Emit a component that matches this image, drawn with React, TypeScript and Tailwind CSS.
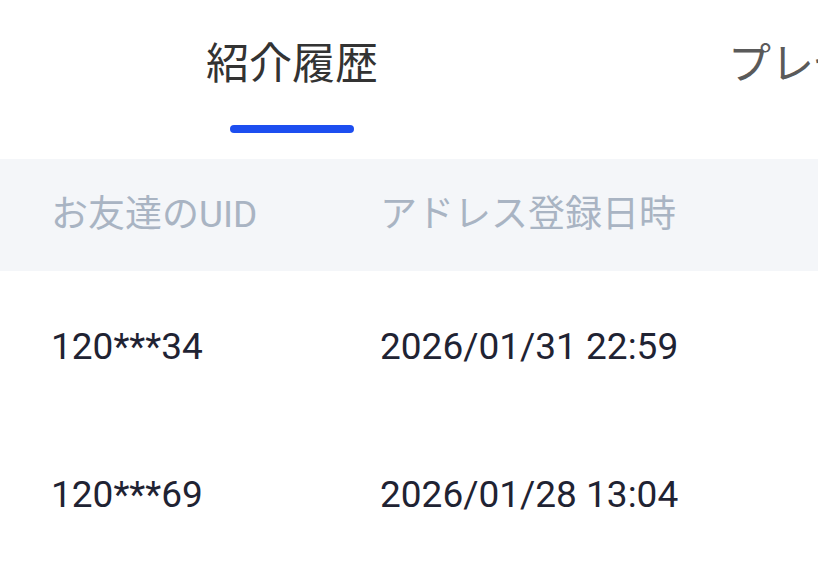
const rows = [
  { uid: '120***34', date: '2026/01/31 22:59' },
  { uid: '120***69', date: '2026/01/28 13:04' },
];

export default function App() {
  return (
    <div
      className="w-[818px] h-[565px] overflow-hidden bg-white"
      style={{ fontFamily: 'Roboto, "Noto Sans CJK JP", sans-serif' }}
    >
      {/* Tabs */}
      <div className="h-[159px] flex items-start whitespace-nowrap overflow-hidden">
        <div className="ml-[206px] flex flex-col items-center pt-[37px] shrink-0">
          <span className="text-[43px] leading-[54px] text-[#333333]">紹介履歴</span>
          <div className="mt-[34px] w-[124px] h-[8px] rounded-full bg-[#1d4ef0]" />
        </div>
        <div className="ml-[350px] pt-[37px] shrink-0">
          <span className="text-[43px] leading-[54px] text-[#5a5a5a]">プレゼント</span>
        </div>
      </div>

      {/* Header */}
      <div className="h-[112px] bg-[#f4f6f9] flex items-center text-[37px] text-[#a9b4c3]">
        <div className="w-[380px] pl-[51px]">お友達のUID</div>
        <div>アドレス登録日時</div>
      </div>

      {/* Rows */}
      {rows.map(r => (
        <div key={r.uid} className="h-[148px] flex items-center pt-[4px] text-[37px] text-[#1f2333]">
          <div className="w-[380px] pl-[51px]">{r.uid}</div>
          <div>{r.date}</div>
        </div>
      ))}
    </div>
  );
}
